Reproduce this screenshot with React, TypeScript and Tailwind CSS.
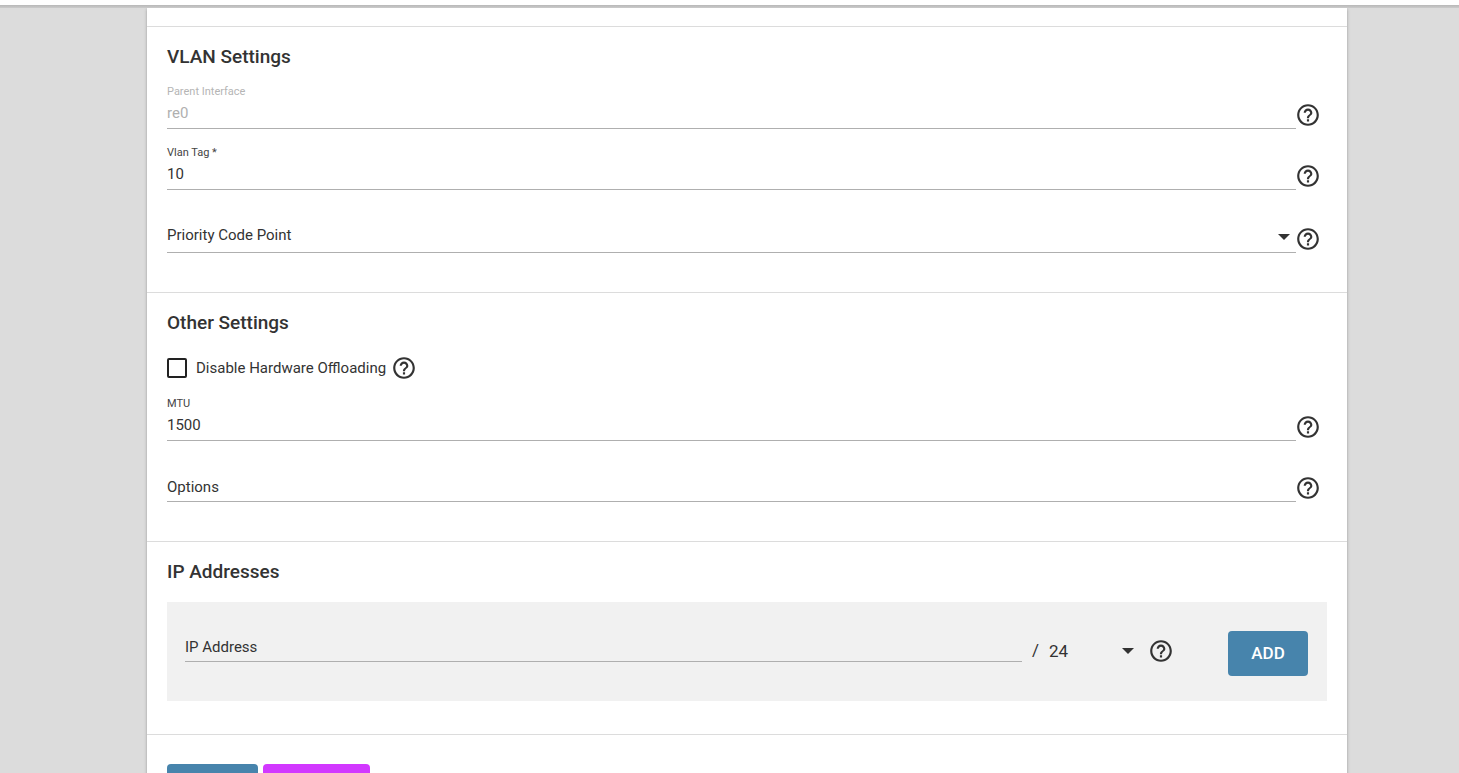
import type { ReactNode } from "react";
import { MdHelpOutline } from "react-icons/md";

const inputClass = "block w-full bg-transparent text-[15px] text-[#333] outline-none";

function HelpButton({ className = "" }: { className?: string }) {
    return (
        <button type="button" aria-label="Help" className={`shrink-0 text-[#333] ${className}`}>
            <MdHelpOutline size={26} />
        </button>
    );
}

function Caret({ className = "" }: { className?: string }) {
    return (
        <svg viewBox="0 0 12 6" className={`pointer-events-none h-1.5 w-3 text-[#333] ${className}`} fill="currentColor">
            <path d="M0 0h12L6 6z" />
        </svg>
    );
}

function Section({ title, children }: { title: string; children: ReactNode }) {
    return (
        <section className="border-t border-[#dcdcdc] px-5 pt-4">
            <h3 className="mb-[13px] text-[19px] leading-7 font-medium">{title}</h3>
            {children}
        </section>
    );
}

interface TextFieldProps {
    id: string;
    label: string;
    value?: string;
    disabled?: boolean;
}

// The label floats above the line when there is a value and rests on it when empty
function TextField({ id, label, value, disabled }: TextFieldProps) {
    return (
        <div className="relative min-w-0 flex-1 border-b border-[#afafaf]">
            {value ? (
                <label htmlFor={id} className={`block text-[11px] leading-4 ${disabled ? "text-[#b5b5b5]" : "text-[#444]"}`}>
                    {label}
                </label>
            ) : (
                <label htmlFor={id} className="pointer-events-none absolute bottom-0 left-0 pb-px text-[15px] leading-[26px]">
                    {label}
                </label>
            )}
            <input
                id={id}
                type="text"
                defaultValue={value}
                disabled={disabled}
                className={`${inputClass} h-7 pb-0.5 disabled:text-[#b0b0b0] ${value ? "" : "mt-4"}`}
            />
        </div>
    );
}

function FieldRow({ children }: { children: ReactNode }) {
    return (
        <div className="flex items-end pr-1.5">
            {children}
            <HelpButton className="mb-px -ml-px" />
        </div>
    );
}

export default function App() {
    return (
        <div className="flex h-screen flex-col overflow-hidden bg-[#dcdcdc] font-[Roboto,sans-serif] text-[#333]">
            <header className="z-10 shrink-0">
                <div className="h-[5px] bg-white" />
                <div className="h-[3px] bg-linear-to-b from-[#b8b8b8] to-[#cbcbcb]" />
            </header>
            <main className="min-h-0 flex-1 overflow-hidden pr-28 pl-[147px]">
                <form className="bg-white pt-[18px] shadow-[0_1px_3px_#999]">
                    <Section title="VLAN Settings">
                        <div className="flex flex-col gap-4 pb-[39px]">
                            <FieldRow>
                                <TextField id="parent" label="Parent Interface" value="re0" disabled />
                            </FieldRow>
                            <FieldRow>
                                <TextField id="tag" label="Vlan Tag *" value="10" />
                            </FieldRow>
                            <FieldRow>
                                <div className="relative min-w-0 flex-1 border-b border-[#afafaf] pt-4">
                                    <label htmlFor="pcp" className="pointer-events-none absolute bottom-0 left-0 pb-1 text-[15px] leading-[26px]">
                                        Priority Code Point
                                    </label>
                                    <select id="pcp" defaultValue="" className={`${inputClass} h-[30px] appearance-none`}>
                                        <option value=""></option>
                                    </select>
                                    <Caret className="absolute right-1.5 bottom-3" />
                                </div>
                            </FieldRow>
                        </div>
                    </Section>

                    <Section title="Other Settings">
                        <div className="mb-2.5 flex h-9 items-center">
                            <input
                                id="offload"
                                type="checkbox"
                                className="size-5 appearance-none rounded-xs border-2 border-[#222] checked:bg-[#4784ac]"
                            />
                            <label htmlFor="offload" className="pr-[5px] pl-[9px] text-[15px]">
                                Disable Hardware Offloading
                            </label>
                            <HelpButton />
                        </div>
                        <div className="flex flex-col gap-4 pb-[39px]">
                            <FieldRow>
                                <TextField id="mtu" label="MTU" value="1500" />
                            </FieldRow>
                            <FieldRow>
                                <TextField id="options" label="Options" />
                            </FieldRow>
                        </div>
                    </Section>

                    <Section title="IP Addresses">
                        <div className="pt-[3px] pb-[33px]">
                            <div className="flex items-center bg-[#f1f1f1] pt-[15px] pr-[19px] pb-[17px] pl-[18px]">
                                <div className="flex flex-1 pb-[22px]">
                                    <TextField id="address" label="IP Address" />
                                </div>
                                <span className="px-2.5 text-[17px]">/</span>
                                <div className="relative w-[85px]">
                                    <select
                                        aria-label="Netmask"
                                        defaultValue="24"
                                        className="block w-full appearance-none bg-transparent text-[17px] leading-7 outline-none"
                                    >
                                        <option>24</option>
                                        <option>32</option>
                                    </select>
                                    <Caret className="absolute top-[11px] right-0" />
                                </div>
                                <HelpButton className="ml-3.5" />
                                <button
                                    type="button"
                                    className="mt-1.5 ml-[54px] h-[45px] w-20 rounded bg-[#4784ac] text-[17px] font-medium text-white"
                                >
                                    ADD
                                </button>
                            </div>
                        </div>
                    </Section>

                    <div className="flex gap-[5px] border-t border-[#dcdcdc] px-5 pt-[29px] pb-8">
                        <button type="submit" aria-label="Save" className="h-[45px] w-[91px] rounded bg-[#4784ac]" />
                        <button type="button" aria-label="Cancel" className="h-[45px] w-[107px] rounded bg-[#d238ff]" />
                    </div>
                </form>
            </main>
        </div>
    );
}
